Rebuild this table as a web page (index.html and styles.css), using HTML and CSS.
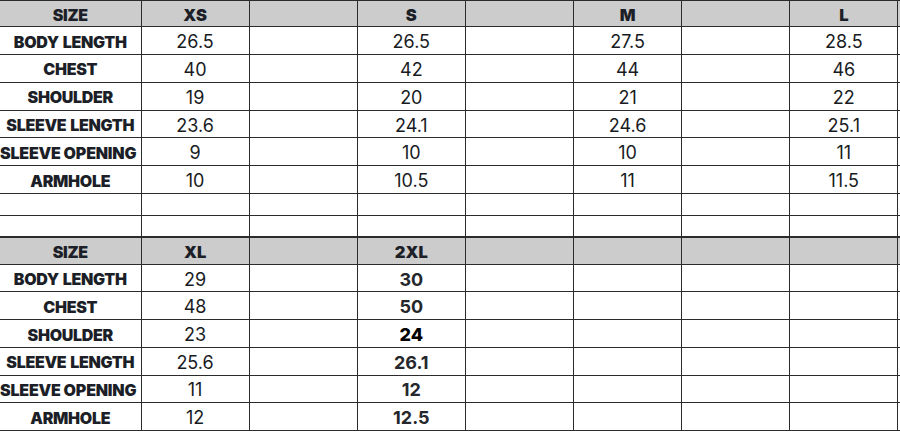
FILE: index.html
```html
<!DOCTYPE html>
<html>
<head>
<meta charset="utf-8">
<link rel="stylesheet" href="styles.css">
</head>
<body>
<div class="sheet">
  <div class="row head">
    <div class="cell lab">SIZE</div><div class="cell hv">XS</div><div class="cell"></div><div class="cell hv">S</div><div class="cell"></div><div class="cell hv">M</div><div class="cell"></div><div class="cell hv">L</div><div class="cell end"></div>
  </div>
  <div class="row">
    <div class="cell lab">BODY LENGTH</div><div class="cell">26.5</div><div class="cell"></div><div class="cell">26.5</div><div class="cell"></div><div class="cell">27.5</div><div class="cell"></div><div class="cell">28.5</div><div class="cell end"></div>
  </div>
  <div class="row">
    <div class="cell lab">CHEST</div><div class="cell">40</div><div class="cell"></div><div class="cell">42</div><div class="cell"></div><div class="cell">44</div><div class="cell"></div><div class="cell">46</div><div class="cell end"></div>
  </div>
  <div class="row">
    <div class="cell lab">SHOULDER</div><div class="cell">19</div><div class="cell"></div><div class="cell">20</div><div class="cell"></div><div class="cell">21</div><div class="cell"></div><div class="cell">22</div><div class="cell end"></div>
  </div>
  <div class="row">
    <div class="cell lab">SLEEVE LENGTH</div><div class="cell">23.6</div><div class="cell"></div><div class="cell">24.1</div><div class="cell"></div><div class="cell">24.6</div><div class="cell"></div><div class="cell">25.1</div><div class="cell end"></div>
  </div>
  <div class="row">
    <div class="cell lab wide">SLEEVE OPENING</div><div class="cell">9</div><div class="cell"></div><div class="cell">10</div><div class="cell"></div><div class="cell">10</div><div class="cell"></div><div class="cell">11</div><div class="cell end"></div>
  </div>
  <div class="row">
    <div class="cell lab">ARMHOLE</div><div class="cell">10</div><div class="cell"></div><div class="cell">10.5</div><div class="cell"></div><div class="cell">11</div><div class="cell"></div><div class="cell">11.5</div><div class="cell end"></div>
  </div>
  <div class="row blank">
    <div class="cell"></div><div class="cell"></div><div class="cell"></div><div class="cell"></div><div class="cell"></div><div class="cell"></div><div class="cell"></div><div class="cell"></div><div class="cell end"></div>
  </div>
  <div class="row blank thick">
    <div class="cell"></div><div class="cell"></div><div class="cell"></div><div class="cell"></div><div class="cell"></div><div class="cell"></div><div class="cell"></div><div class="cell"></div><div class="cell end"></div>
  </div>
  <div class="row head head2">
    <div class="cell lab">SIZE</div><div class="cell hv">XL</div><div class="cell"></div><div class="cell hv">2XL</div><div class="cell"></div><div class="cell"></div><div class="cell"></div><div class="cell"></div><div class="cell end"></div>
  </div>
  <div class="row r2">
    <div class="cell lab">BODY LENGTH</div><div class="cell">29</div><div class="cell"></div><div class="cell bold">30</div><div class="cell"></div><div class="cell"></div><div class="cell"></div><div class="cell"></div><div class="cell end"></div>
  </div>
  <div class="row r2">
    <div class="cell lab">CHEST</div><div class="cell">48</div><div class="cell"></div><div class="cell bold">50</div><div class="cell"></div><div class="cell"></div><div class="cell"></div><div class="cell"></div><div class="cell end"></div>
  </div>
  <div class="row r2">
    <div class="cell lab">SHOULDER</div><div class="cell">23</div><div class="cell"></div><div class="cell bold black">24</div><div class="cell"></div><div class="cell"></div><div class="cell"></div><div class="cell"></div><div class="cell end"></div>
  </div>
  <div class="row r2">
    <div class="cell lab">SLEEVE LENGTH</div><div class="cell">25.6</div><div class="cell"></div><div class="cell bold">26.1</div><div class="cell"></div><div class="cell"></div><div class="cell"></div><div class="cell"></div><div class="cell end"></div>
  </div>
  <div class="row r2">
    <div class="cell lab wide">SLEEVE OPENING</div><div class="cell">11</div><div class="cell"></div><div class="cell bold">12</div><div class="cell"></div><div class="cell"></div><div class="cell"></div><div class="cell"></div><div class="cell end"></div>
  </div>
  <div class="row r2">
    <div class="cell lab">ARMHOLE</div><div class="cell">12</div><div class="cell"></div><div class="cell bold">12.5</div><div class="cell"></div><div class="cell"></div><div class="cell"></div><div class="cell"></div><div class="cell end"></div>
  </div>
</div>
</body>
</html>
```
FILE: styles.css
```css
html, body {
  margin: 0;
  padding: 0;
  background: #ffffff;
}
body {
  width: 900px;
  height: 433px;
  overflow: hidden;
}
.sheet {
  width: 900px;
  border-top: 1.5px solid #2b2b2b;
  font-family: Inter, "Liberation Sans", sans-serif;
  color: #181b22;
}
.row {
  display: grid;
  grid-template-columns: 141.5px repeat(7, 108.14px) 1fr;
  height: 27.8px;
  box-sizing: border-box;
  border-bottom: 1.5px solid #2b2b2b;
}
.row.head {
  height: 26.25px;
  background: #cccccc;
}
.row.head2 {
  height: 26.3px;
}
.row.r2 {
  height: 27.73px;
}
.row.blank {
  height: 22.2px;
}
.row.thick {
  border-bottom-width: 2.5px;
}
.cell {
  box-sizing: border-box;
  border-right: 1.5px solid #2b2b2b;
  display: flex;
  align-items: center;
  justify-content: center;
  padding-top: 2px;
  font-size: 18px;
  font-weight: 400;
  white-space: nowrap;
  overflow: visible;
}
.cell.end {
  border-right: none;
}
.lab {
  font-weight: 900;
  font-size: 16px;
  letter-spacing: -0.3px;
  word-spacing: 1px;
  color: #1c1f27;
}
.lab.wide {
  justify-content: flex-start;
  letter-spacing: -0.2px;
  word-spacing: 0;
}
.hv {
  font-weight: 900;
  font-size: 16.5px;
  color: #1c1f27;
}
.bold {
  font-weight: 700;
  color: #25272c;
}
.black {
  font-weight: 800;
  color: #000000;
}
```
